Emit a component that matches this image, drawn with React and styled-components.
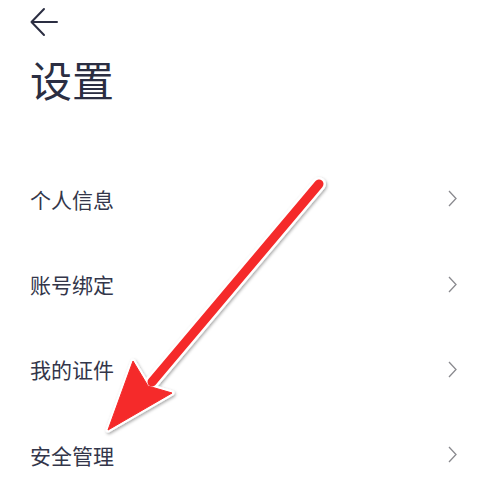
import styled, { createGlobalStyle } from "styled-components";

const GlobalStyle = createGlobalStyle`
  html, body {
    margin: 0;
    padding: 0;
    background: #ffffff;
  }
  body {
    font-family: "Noto Sans CJK SC", "Noto Sans", sans-serif;
  }
`;

const Page = styled.div`
  position: relative;
  width: 485px;
  height: 490px;
  overflow: hidden;
  background: #ffffff;
  padding: 0 28px 0 30px;
  box-sizing: border-box;
`;

const TopBar = styled.div`
  height: 44px;
  display: flex;
  align-items: center;
`;

const BackButton = styled.button`
  border: none;
  background: none;
  padding: 0;
  margin: 0;
  width: 28px;
  height: 30px;
  display: flex;
  align-items: center;
  cursor: pointer;
  color: #2b2e42;
`;

const Title = styled.h1`
  margin: 9px 0 0;
  font-size: 42px;
  line-height: 52px;
  font-weight: 400;
  color: #2b2e42;
`;

const List = styled.div`
  margin-top: 51px;
  display: flex;
  flex-direction: column;
`;

const Row = styled.div`
  height: 85.4px;
  display: flex;
  align-items: center;
  justify-content: space-between;
`;

const Label = styled.span`
  font-size: 21px;
  color: #33364a;
`;

const Chevron = styled.svg`
  width: 9px;
  height: 17px;
`;

const Annotation = styled.svg`
  position: absolute;
  left: 0;
  top: 0;
  pointer-events: none;
`;

const items = ["个人信息", "账号绑定", "我的证件", "安全管理"];

function BackArrow() {
  return (
    <svg width="28" height="30" viewBox="0 0 28 30" fill="none">
      <path d="M27 15H1.5M14 2L1.5 15L14 28" stroke="currentColor" strokeWidth="2" strokeLinecap="round" strokeLinejoin="round" />
    </svg>
  );
}

function RedArrow() {
  const head = "M108 430 L133 361 L148 386 L172 393 Z";
  return (
    <Annotation width="485" height="490" viewBox="0 0 485 490">
      <defs>
        <filter id="shadow" x="-20%" y="-20%" width="140%" height="140%">
          <feDropShadow dx="1" dy="1.5" stdDeviation="1.5" floodColor="#000" floodOpacity="0.35" />
        </filter>
      </defs>
      <g filter="url(#shadow)">
        <line x1="319" y1="184" x2="152" y2="382" stroke="#ffffff" strokeWidth="14" strokeLinecap="round" />
        <path d={head} fill="#ffffff" stroke="#ffffff" strokeWidth="5" strokeLinejoin="round" />
      </g>
      <line x1="319" y1="184" x2="152" y2="382" stroke="#f52a2a" strokeWidth="9" strokeLinecap="round" />
      <path d={head} fill="#f52a2a" stroke="#f52a2a" strokeWidth="1" strokeLinejoin="round" />
    </Annotation>
  );
}

export default function App() {
  return (
    <Page>
      <GlobalStyle />
      <TopBar>
        <BackButton aria-label="返回">
          <BackArrow />
        </BackButton>
      </TopBar>
      <Title>设置</Title>
      <List>
        {items.map((item) => (
          <Row key={item}>
            <Label>{item}</Label>
            <Chevron viewBox="0 0 9 17" fill="none">
              <path d="M1 1L8 8.5L1 16" stroke="#8a8a8f" strokeWidth="1.3" />
            </Chevron>
          </Row>
        ))}
      </List>
      <RedArrow />
    </Page>
  );
}
